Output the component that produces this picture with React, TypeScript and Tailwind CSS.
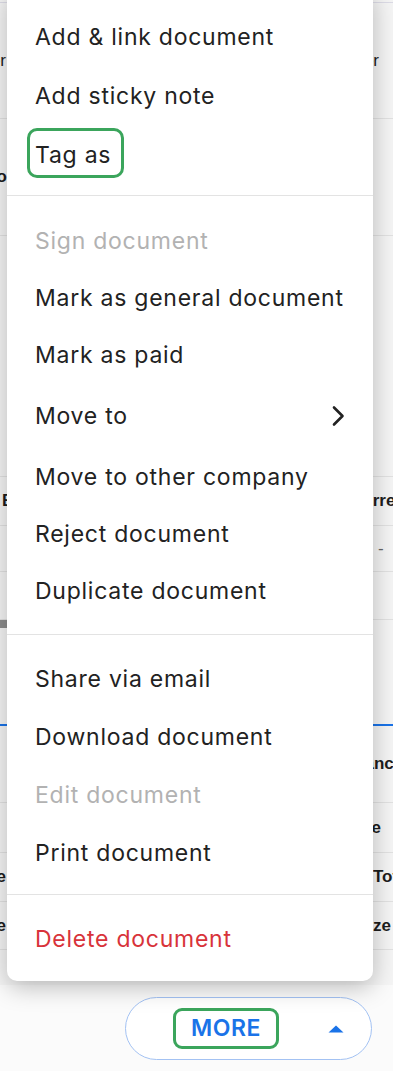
import type { ReactNode } from 'react'

type Item = { label: string; tone?: 'normal' | 'muted' | 'danger'; tagged?: boolean; submenu?: boolean; h?: string }

const groups: { pad: string; items: Item[] }[] = [
  {
    pad: 'pt-[19px] pb-[11px]',
    items: [
      { label: 'Add & link document', h: 'h-[59px]' },
      { label: 'Add sticky note', h: 'h-[59px]' },
      { label: 'Tag as', tagged: true, h: 'h-[59px]' },
    ],
  },
  {
    pad: 'pt-[16px] pb-[15px]',
    items: [
      { label: 'Sign document', tone: 'muted' },
      { label: 'Mark as general document' },
      { label: 'Mark as paid' },
      { label: 'Move to', submenu: true, h: 'h-[65px]' },
      { label: 'Move to other company' },
      { label: 'Reject document' },
      { label: 'Duplicate document' },
    ],
  },
  {
    pad: 'pt-[15px] pb-[12px]',
    items: [
      { label: 'Share via email', h: 'h-[58px]' },
      { label: 'Download document', h: 'h-[58px]' },
      { label: 'Edit document', tone: 'muted', h: 'h-[58px]' },
      { label: 'Print document', h: 'h-[58px]' },
    ],
  },
  {
    pad: 'pt-[15px] pb-[13px]',
    items: [{ label: 'Delete document', tone: 'danger', h: 'h-[58px]' }],
  },
]

function MenuRow({ item }: { item: Item }) {
  const color =
    item.tone === 'muted' ? 'text-[#b2b2b2]' : item.tone === 'danger' ? 'text-[#d8333a]' : 'text-[#222222]'
  return (
    <div className={`flex items-center justify-between pl-[28px] pr-[27px] ${item.h ?? 'h-[57px]'}`}>
      <span className={`relative text-[23px] leading-[26px] tracking-[0.75px] ${color}`}>
        {item.label}
        {item.tagged && (
          <span className="absolute -left-[8px] -right-[13px] -top-[14px] -bottom-[10px] rounded-[10px] border-[3px] border-[#3ba55c]" />
        )}
      </span>
      {item.submenu && (
        <svg width="16" height="24" viewBox="0 0 16 24" fill="none">
          <path d="M4 3.5 L12.5 12 L4 20.5" stroke="#222" strokeWidth="2.6" strokeLinecap="round" strokeLinejoin="round" />
        </svg>
      )}
    </div>
  )
}

// row of the table that sits behind the menu; only the edges show
function BgRow({ h, left, right, rightClass, leftClass, border = true }: {
  h: string
  left?: ReactNode
  right?: ReactNode
  rightClass?: string
  leftClass?: string
  border?: boolean
}) {
  return (
    <div className={`flex items-center ${h} ${border ? 'border-b border-[#e2e2e2]' : ''}`}>
      <div className={`flex shrink-0 whitespace-nowrap ${leftClass ?? 'w-[6px] justify-end'}`}>{left}</div>
      <div className="flex-1" />
      <div className={`flex shrink-0 whitespace-nowrap ${rightClass ?? ''}`}>{right}</div>
    </div>
  )
}

export default function App() {
  return (
    <div
      className="relative h-[1071px] w-full overflow-hidden bg-[#f5f5f5] text-[17px] text-[#1d1d1d]"
      style={{ fontFamily: '"Liberation Sans", Arial, sans-serif' }}
    >
      {/* page content behind the menu */}
      <div className="flex flex-col">
        <div className="h-[3px] border-b border-[#dcdbe6]" />
        <BgRow h="h-[116px]" left="Supplier" right="Invoice number" rightClass="mr-[14px]" />
        <BgRow h="h-[117px]" left={<b>Info</b>} leftClass="w-[7px] justify-end" />
        <BgRow h="h-[241px]" />
        <BgRow h="h-[49px]" left={<b>Balance</b>} leftClass="pl-[2px] w-[6px]" right={<b>Currency</b>} rightClass="w-[43px]" />
        <BgRow h="h-[46px]" right={<span className="text-[#666]">-</span>} rightClass="w-[15px]" />
        <BgRow h="h-[48px]" />
        <div className="flex h-[8px]">
          <div className="w-[40px] bg-[#8c8c8c]" />
        </div>
        <div className="h-[96px]" />
        <div className="h-[2px] bg-[#1a73e8]" />
        <BgRow h="h-[77px]" right={<b>Balance</b>} rightClass="w-[55px]" />
        <BgRow h="h-[50px]" right={<b>Due date</b>} rightClass="mr-[12px]" />
        <BgRow h="h-[49px]" left={<b>Name</b>} right={<b>Total</b>} rightClass="w-[20px]" />
        <BgRow h="h-[48px]" left={<b>Name</b>} right={<b>Size</b>} rightClass="w-[36px]" />
        <div className="h-[35px]" />
        {/* bottom action bar */}
        <div className="flex h-[86px] items-start justify-end bg-[#fbfbfb] pr-[21px] pt-[12px]">
          <button className="flex h-[63px] w-[247px] items-center rounded-full border border-[#a3c2f3] bg-white pl-[47px]">
            <span
              className="flex h-[41px] w-[106px] items-center justify-center rounded-[9px] border-[3px] border-[#3ba55c] text-[23px] font-semibold tracking-[0.5px] text-[#1a73e8]"
              style={{ fontFamily: 'Inter, "Noto Sans", sans-serif' }}
            >
              MORE
            </span>
            <svg className="ml-[49px]" width="16" height="8" viewBox="0 0 16 8">
              <path d="M0.5 7.5 L8 0.5 L15.5 7.5 Z" fill="#1a73e8" />
            </svg>
          </button>
        </div>
      </div>

      {/* dropdown menu */}
      <div
        className="absolute left-[7px] top-[-12px] w-[366px] rounded-[10px] bg-white shadow-[0_6px_24px_rgba(0,0,0,0.26)]"
        style={{ fontFamily: 'Inter, "Noto Sans", sans-serif' }}
      >
        {groups.map((g, gi) => (
          <div key={gi} className={`${g.pad} ${gi > 0 ? 'border-t border-[#e3e3e3]' : ''}`}>
            {g.items.map(item => (
              <MenuRow key={item.label} item={item} />
            ))}
          </div>
        ))}
      </div>
    </div>
  )
}
